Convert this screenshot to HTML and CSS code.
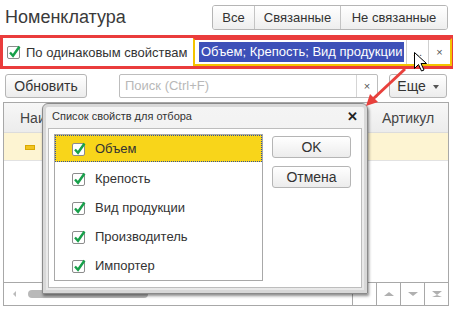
FILE: index.html
```html
<!DOCTYPE html>
<html lang="ru">
<head>
    <meta charset="UTF-8">
    <title>Номенклатура</title>
    <link rel="stylesheet" href="styles.css">
</head>
<body>
<div class="page">

    <!-- Заголовок и переключатель -->
    <header class="top">
        <h1 class="title">Номенклатура</h1>
        <div class="switch">
            <button class="switch-btn">Все</button>
            <button class="switch-btn">Связанные</button>
            <button class="switch-btn">Не связанные</button>
        </div>
    </header>

    <!-- Отбор по свойствам -->
    <div class="filter">
        <label class="filter-check">
            <svg class="cb" width="16" height="16" viewBox="0 0 16 16"><rect x="1.5" y="2.5" width="12" height="12" rx="1.5" fill="#fff" stroke="#8c8c8c"/><path d="M4 8.5 L7 11.8 L13.5 2.5" fill="none" stroke="#17a04a" stroke-width="2.4"/></svg>
            По одинаковым свойствам
        </label>
        <div class="filter-field">
            <span class="filter-value"><span class="selected">Объем; Крепость; Вид продукции</span></span>
            <span class="field-btn">...</span>
            <span class="field-btn">×</span>
        </div>
    </div>

    <!-- Командная панель -->
    <div class="toolbar">
        <button class="btn refresh">Обновить</button>
        <div class="search">
            <span class="search-text">Поиск (Ctrl+F)</span>
            <span class="search-clear">×</span>
        </div>
        <button class="btn more">Еще <span class="caret"></span></button>
    </div>

    <!-- Таблица -->
    <div class="grid">
        <div class="grid-head">
            <span class="col-name">Наи</span>
            <span class="col-code">Артикул</span>
        </div>
        <div class="grid-row current"><span class="minus"></span></div>
        <div class="grid-body"></div>
        <div class="grid-foot">
            <div class="hscroll">
                <span class="arrow-left"></span>
                <span class="thumb"></span>
            </div>
            <span class="nav"></span>
            <span class="nav"><span class="tri-up"></span></span>
            <span class="nav"><span class="tri-down"></span></span>
            <span class="nav"><span class="tri-end"></span></span>
        </div>
    </div>

    <!-- Окно выбора свойств -->
    <div class="dialog">
        <div class="dialog-title">
            <span>Список свойств для отбора</span>
            <span class="dialog-close">✕</span>
        </div>
        <div class="dialog-body">
            <ul class="props" id="props"></ul>
            <div class="dialog-actions">
                <button class="btn action">OK</button>
                <button class="btn action">Отмена</button>
            </div>
        </div>
    </div>

    <!-- Стрелка и курсор -->
    <svg class="overlay" width="455" height="310" viewBox="0 0 455 310">
        <line x1="405" y1="69" x2="373" y2="99" stroke="#e8403c" stroke-width="3"/>
        <polygon points="366,106 370,94 378,102" fill="#e8403c"/>
        <path d="M414.5 52.5 L414.5 68.5 L418.5 64.5 L421.5 71 L424 70 L421 63.5 L426.5 63.5 Z" fill="#fff" stroke="#000" stroke-width="1"/>
    </svg>
</div>

<script>
    const props = ['Объем', 'Крепость', 'Вид продукции', 'Производитель', 'Импортер'];
    const list = document.getElementById('props');
    props.forEach((name, i) => {
        const li = document.createElement('li');
        li.className = i === 0 ? 'prop active' : 'prop';
        li.innerHTML = `<svg class="cb" width="16" height="16" viewBox="0 0 16 16"><rect x="1.5" y="2.5" width="12" height="12" rx="1.5" fill="#fff" stroke="#8c8c8c"/><path d="M4 8.5 L7 11.8 L13.5 2.5" fill="none" stroke="#17a04a" stroke-width="2.4"/></svg><span>${name}</span>`;
        list.appendChild(li);
    });
</script>
</body>
</html>
```

FILE: styles.css
```css
body {
    margin: 0;
    font-family: 'Liberation Sans', Arial, sans-serif;
    color: #333;
    background: #fff;
}
.page {
    position: relative;
    width: 455px;
    height: 310px;
    overflow: hidden;
}
button {
    font-family: inherit;
    color: #333;
}

/* Заголовок */
.top {
    display: flex;
    justify-content: space-between;
    align-items: flex-start;
    height: 30px;
    padding: 5px 7px 0 5px;
    box-sizing: border-box;
}
.title {
    margin: 0;
    font-size: 18px;
    font-weight: normal;
    line-height: 24px;
    color: #3a3a3a;
}
.switch {
    display: flex;
    border: 1px solid #b5b5b5;
    border-radius: 3px;
    height: 25px;
    box-sizing: border-box;
    overflow: hidden;
}
.switch-btn {
    border: none;
    border-left: 1px solid #c4c4c4;
    background: linear-gradient(#fff, #eee);
    font-size: 13px;
    padding: 0;
}
.switch-btn:first-child { border-left: none; width: 41px; }
.switch-btn:nth-child(2) { width: 86px; }
.switch-btn:nth-child(3) { width: 107px; }

/* Отбор */
.filter {
    display: flex;
    align-items: center;
    margin-top: 5px;
    width: 453px;
    height: 34px;
    box-sizing: border-box;
    border: 3px solid #ea3c3c;
}
.filter-check {
    display: flex;
    align-items: center;
    gap: 4px;
    padding-left: 3px;
    font-size: 13px;
    white-space: nowrap;
    width: 187px;
    flex-shrink: 0;
}
.filter-field {
    display: flex;
    align-items: stretch;
    flex: 1;
    height: 28px;
    margin-top: -1px;
    box-sizing: border-box;
    border: 2px solid #f3c300;
    border-top-color: #ea3c3c;
}
.filter-value {
    display: flex;
    align-items: center;
    padding-left: 4px;
    width: 207px;
    white-space: nowrap;
}
.selected {
    background: #3d50b8;
    color: #fff;
    font-size: 13px;
    line-height: 20px;
    padding: 0 2px;
}
.field-btn {
    width: 21px;
    border-left: 1px solid #cfcfcf;
    display: flex;
    align-items: center;
    justify-content: center;
    font-size: 11px;
    color: #555;
}

/* Командная панель */
.toolbar {
    display: flex;
    align-items: center;
    height: 25px;
    margin-top: 4px;
    padding-left: 5px;
}
.btn {
    height: 24px;
    border: 1px solid #b5b5b5;
    border-radius: 3px;
    background: linear-gradient(#fff, #ececec);
    font-size: 14px;
    padding: 0;
}
.refresh { width: 82px; }
.search {
    display: flex;
    margin-left: 32px;
    width: 259px;
    height: 24px;
    box-sizing: border-box;
    border: 1px solid #bdbdbd;
    border-radius: 2px;
}
.search-text {
    flex: 1;
    padding-left: 5px;
    font-size: 13px;
    line-height: 22px;
    color: #b8b8b8;
}
.search-clear {
    width: 20px;
    border-left: 1px solid #d5d5d5;
    text-align: center;
    font-size: 11px;
    line-height: 22px;
    color: #555;
}
.more {
    margin-left: 11px;
    width: 58px;
}
.caret {
    display: inline-block;
    border: 3px solid transparent;
    border-top: 4px solid #555;
    border-bottom: none;
    vertical-align: middle;
    margin-left: 3px;
}

/* Таблица */
.grid {
    display: flex;
    flex-direction: column;
    margin: 4px 0 0 3px;
    width: 446px;
    height: 204px;
    box-sizing: border-box;
    border: 1px solid #a8a8a8;
}
.grid-head {
    display: flex;
    justify-content: space-between;
    height: 30px;
    box-sizing: border-box;
    border-bottom: 1px solid #dcdcdc;
    background: linear-gradient(#f7f7f7, #ececec);
    font-size: 14px;
    line-height: 30px;
    color: #444;
}
.col-name { padding-left: 16px; }
.col-code { width: 66px; }
.grid-row {
    display: flex;
    align-items: center;
    height: 28px;
    box-sizing: border-box;
    border-bottom: 1px solid #e2e2e2;
}
.current { background: #fdf4d2; }
.minus {
    width: 8px;
    height: 3px;
    margin-left: 21px;
    margin-top: 2px;
    background: #f2c41e;
    border: 1px solid #d9a800;
}
.grid-body { flex: 1; }
.grid-foot {
    display: flex;
    height: 22px;
    border-top: 1px solid #a8a8a8;
}
.hscroll {
    flex: 1;
    display: flex;
    align-items: center;
    padding-left: 9px;
}
.arrow-left {
    border: 3px solid transparent;
    border-right: 3px solid #bbb;
    border-left: none;
}
.thumb {
    margin-left: 12px;
    width: 120px;
    height: 8px;
    border-radius: 4px;
    background: #b9b9b9;
}
.nav {
    width: 23px;
    border-left: 1px solid #a8a8a8;
    display: flex;
    align-items: center;
    justify-content: center;
}
.tri-up {
    border: 5px solid transparent;
    border-bottom: 4px solid #b0b0b0;
    border-top: none;
}
.tri-down {
    border: 5px solid transparent;
    border-top: 4px solid #b0b0b0;
    border-bottom: none;
}
.tri-end {
    width: 10px;
    height: 6px;
    box-sizing: border-box;
    border: 5px solid transparent;
    border-top: 4px solid #b0b0b0;
    border-bottom: 2px solid #b0b0b0;
    border-left-width: 5px;
}

/* Окно */
.dialog {
    position: absolute;
    left: 42px;
    top: 103px;
    width: 326px;
    height: 191px;
    box-sizing: border-box;
    border: 1px solid #8a8a8a;
    border-radius: 6px 6px 0 0;
    background: linear-gradient(#f4f4f4, #e8e8e8);
    box-shadow: 1px 2px 3px rgba(0, 0, 0, 0.45), inset 0 0 0 3px #d8d8d8;
    display: flex;
    flex-direction: column;
}
.dialog-title {
    display: flex;
    justify-content: space-between;
    align-items: center;
    height: 24px;
    padding: 0 9px 0 9px;
    font-size: 11px;
    color: #333;
}
.dialog-close {
    font-size: 13px;
    font-weight: bold;
    color: #222;
}
.dialog-body {
    flex: 1;
    display: flex;
    margin: 0 5px 5px 5px;
    padding: 5px;
    background: #fff;
    border: 1px solid #bdbdbd;
}
.props {
    list-style: none;
    margin: 0;
    padding: 0;
    width: 209px;
    height: 147px;
    box-sizing: border-box;
    border: 1px solid #a8a8a8;
}
.prop {
    display: flex;
    align-items: center;
    height: 29px;
    padding-left: 16px;
    gap: 8px;
    font-size: 13px;
    box-sizing: border-box;
}
.prop.active {
    height: 27px;
    margin-bottom: 2px;
    background: #f8d51a;
    outline: 1px dotted #3050a0;
    outline-offset: -1px;
}
.dialog-actions {
    display: flex;
    flex-direction: column;
    gap: 8px;
    margin-left: 9px;
    padding-top: 2px;
}
.action {
    width: 79px;
    height: 22px;
    font-size: 14px;
}

.overlay {
    position: absolute;
    left: 0;
    top: 0;
    pointer-events: none;
}
```
